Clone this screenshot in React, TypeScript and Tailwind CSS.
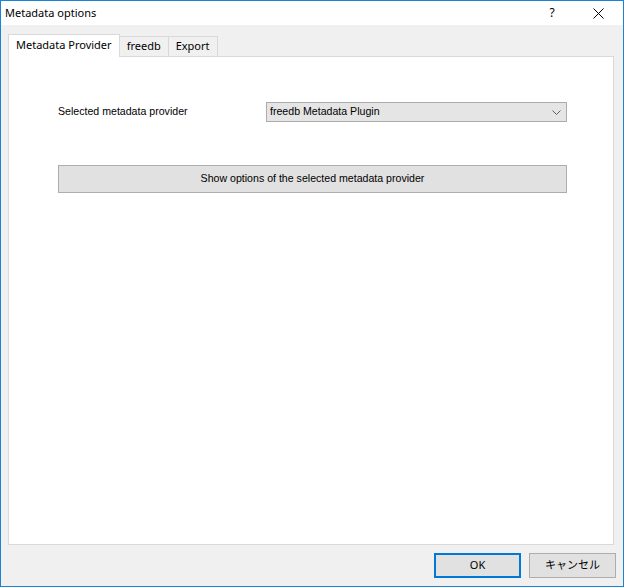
import React from 'react';

const ui = { fontFamily: '"Noto Sans", "Open Sans", sans-serif' };
const classic = { fontFamily: '"Liberation Sans", Arial, sans-serif' };

const Tab = ({ label, active }: { label: string; active?: boolean }) => (
  <div
    className={
      active
        ? 'h-[23px] px-[7px] pt-[2px] bg-white border border-b-0 border-[#d9d9d9] text-[11px] text-black relative z-10 -mb-px'
        : 'h-[20px] px-[7px] mt-[2px] bg-[#f0f0f0] border border-b-0 border-l-0 border-[#d9d9d9] text-[11px] text-black flex items-center'
    }
    style={ui}
  >
    {label}
  </div>
);

const App: React.FC = () => {
  return (
    <div className="w-[624px] h-[587px] border border-[#1883d7] flex flex-col bg-[#f0f0f0]">
      <div className="h-[24px] bg-white flex items-center pl-[4px] shrink-0">
        <span className="text-[11px] text-black flex-1" style={ui}>Metadata options</span>
        <span className="text-[12px] text-black w-[46px] text-center" style={ui}>?</span>
        <div className="w-[46px] flex justify-center mr-[2px]">
          <svg width="11" height="11" viewBox="0 0 11 11">
            <path d="M0.5 0.5 L10.5 10.5 M10.5 0.5 L0.5 10.5" stroke="#000" strokeWidth="1" />
          </svg>
        </div>
      </div>

      <div className="flex-1 flex flex-col pt-[9px] pl-[7px] pr-[9px]">
        <div className="flex items-start h-[22px]">
          <Tab label="Metadata Provider" active />
          <Tab label="freedb" />
          <Tab label="Export" />
        </div>
        <div className="flex-1 bg-white border border-[#d9d9d9] pl-[49px] pt-[45px]">
          <div className="flex items-center">
            <span className="w-[208px] text-[10.6px] text-black" style={classic}>Selected metadata provider</span>
            <div className="w-[301px] h-[20px] bg-[#e5e5e5] border border-[#acacac] flex items-center pl-[3px] pr-[5px]">
              <span className="flex-1 text-[10.6px] text-black" style={classic}>freedb Metadata Plugin</span>
              <svg width="9" height="5" viewBox="0 0 9 5">
                <path d="M0.5 0.5 L4.5 4.5 L8.5 0.5" stroke="#606060" strokeWidth="1" fill="none" />
              </svg>
            </div>
          </div>
          <div className="mt-[43px] w-[509px] h-[28px] bg-[#e1e1e1] border border-[#adadad] flex items-center justify-center">
            <span className="text-[10.6px] text-black" style={classic}>Show options of the selected metadata provider</span>
          </div>
        </div>
        <div className="flex justify-end gap-[8px] pt-[8px] pb-[8px] mr-[-2px]">
          <div className="w-[87px] h-[25px] bg-[#e1e1e1] border-2 border-[#0078d7] flex items-center justify-center">
            <span className="text-[11px] text-black" style={ui}>OK</span>
          </div>
          <div className="w-[87px] h-[25px] bg-[#e1e1e1] border border-[#adadad] flex items-center justify-center">
            <span className="text-[11px] text-black" style={{ fontFamily: '"Noto Sans", "Noto Sans CJK JP", sans-serif' }}>キャンセル</span>
          </div>
        </div>
      </div>
    </div>
  );
};

export default App;
